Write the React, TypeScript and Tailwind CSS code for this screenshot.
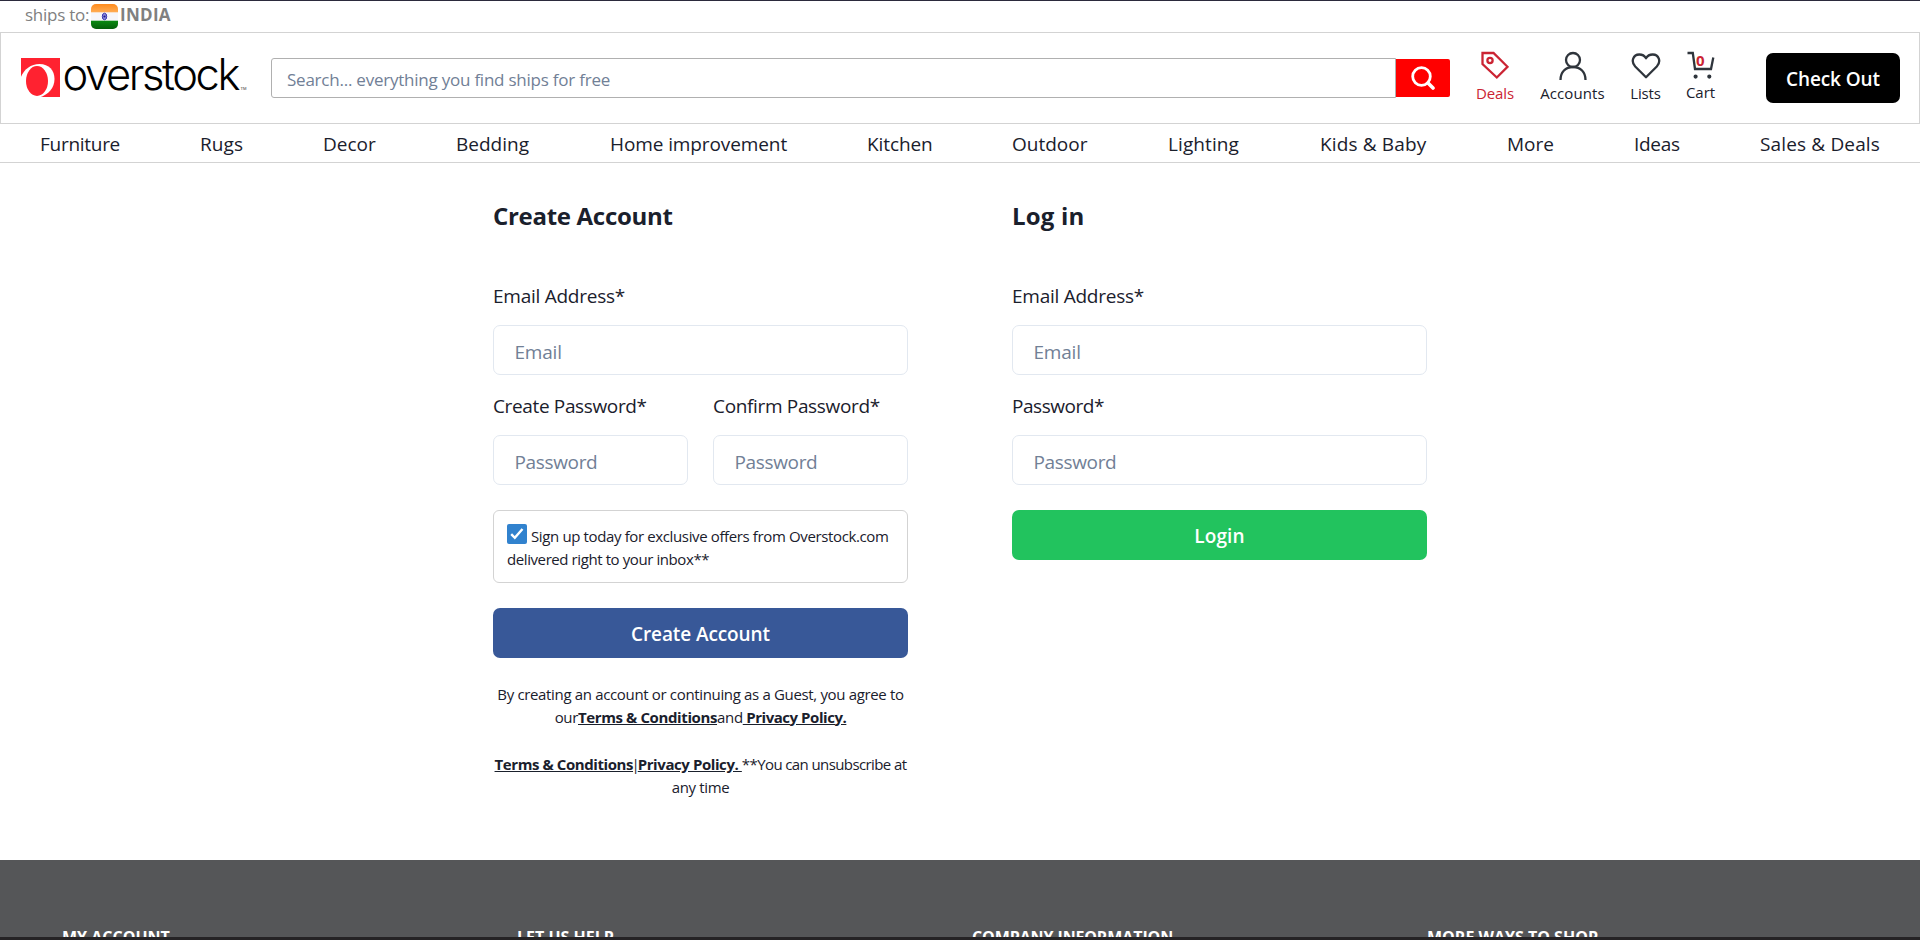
import type { ReactNode } from "react";

const navItems = [
  { label: "Furniture", cls: "w-[80px] tracking-[-0.28px]" },
  { label: "Rugs", cls: "w-[43px] tracking-[0.1px]" },
  { label: "Decor", cls: "w-[53px]" },
  { label: "Bedding", cls: "w-[74px]" },
  { label: "Home improvement", cls: "w-[177px] tracking-[-0.1px]" },
  { label: "Kitchen", cls: "w-[65px] tracking-[-0.1px]" },
  { label: "Outdoor", cls: "w-[76px]" },
  { label: "Lighting", cls: "w-[72px] tracking-[0.1px]" },
  { label: "Kids & Baby", cls: "w-[107px] tracking-[0.15px]" },
  { label: "More", cls: "w-[47px]" },
  { label: "Ideas", cls: "w-[46px] tracking-[-0.3px]" },
  { label: "Sales & Deals", cls: "w-[120px] tracking-[0.15px]" },
];

const footerItems = [
  { label: "MY ACCOUNT", cls: "" },
  { label: "LET US HELP", cls: "" },
  { label: "COMPANY INFORMATION", cls: "tracking-[-0.1px]" },
  { label: "MORE WAYS TO SHOP", cls: "" },
];

function Flag() {
  return (
    <svg width="27" height="25" viewBox="0 0 27 25">
      <defs>
        <clipPath id="flagClip"><rect width="27" height="25" rx="5" /></clipPath>
        <linearGradient id="saffron" x1="0" y1="0" x2="0" y2="1"><stop offset="0" stopColor="#ff8a1c" /><stop offset="1" stopColor="#ffad55" /></linearGradient>
        <linearGradient id="green" x1="0" y1="0" x2="0" y2="1"><stop offset="0" stopColor="#0a8a12" /><stop offset="1" stopColor="#045f0a" /></linearGradient>
      </defs>
      <g clipPath="url(#flagClip)">
        <rect width="27" height="25" fill="#f6f6fa" />
        <rect width="27" height="8.3" fill="url(#saffron)" />
        <rect y="16.7" width="27" height="8.3" fill="url(#green)" />
        <ellipse cx="13.5" cy="12.5" rx="2.2" ry="3.3" fill="#8f8fd6" stroke="#3a35b0" strokeWidth="1" />
        <circle cx="13.5" cy="12.5" r="1.1" fill="#1c1894" />
      </g>
    </svg>
  );
}

function Logo() {
  return (
    <svg width="226" height="50" viewBox="0 0 226 50" className="shrink-0 overflow-visible">
      <rect width="39" height="39" fill="#ff2230" />
      <path d="M-0.500 20C3 11 10 6 18.500 6C28 6 33.500 12.500 33.500 21C33.500 30 27.500 36.500 18.500 39.500H-0.500Z" fill="#fff" />
      <ellipse cx="16" cy="23" rx="11" ry="15" fill="#ff2230" />
      <text x="41.500" y="32" textLength="178" lengthAdjust="spacing" className="font-['Inter',sans-serif] text-[43.5px] font-light" fill="#000">overstock</text>
      <text x="219.500" y="32" textLength="6" lengthAdjust="spacingAndGlyphs" className="font-['Liberation_Sans',sans-serif] text-[4px]" fill="#333">TM</text>
    </svg>
  );
}

function HeaderAction({ label, cls, children }: { label: string; cls: string; children: ReactNode }) {
  return (
    <div className={`flex shrink-0 flex-col items-center ${cls}`}>
      {children}
      <span className="mt-px text-[15px] leading-[22px] whitespace-nowrap">{label}</span>
    </div>
  );
}

function Field({ label, labelCls, placeholder, type, inputCls }: { label: string; labelCls: string; placeholder: string; type: string; inputCls: string }) {
  return (
    <label className="flex min-w-0 flex-1 flex-col">
      <span className={`h-[30px] text-[19px] leading-[30px] whitespace-nowrap ${labelCls}`}>{label}</span>
      <input
        type={type}
        placeholder={placeholder}
        className={`mt-[14px] h-[50px] w-full rounded-[7px] border border-[#e2e8f0] px-[20.5px] pt-[3px] text-[19px] outline-none placeholder:text-[#718096] ${inputCls}`}
      />
    </label>
  );
}

export default function App() {
  return (
    <div className="flex h-[940px] w-[1920px] flex-col overflow-hidden bg-white font-['Open_Sans','Noto_Sans',sans-serif] text-[#1a202c]">
      <div className="h-px shrink-0 bg-[#2b2a3c]" />
      <div className="flex h-[31px] shrink-0 items-start pl-[25px] text-[17px] leading-[26px] text-[#808080]">
        <span className="w-[66px] pt-[1px] tracking-[-0.25px] whitespace-nowrap">ships to:</span>
        <span className="mt-[3px]"><Flag /></span>
        <b className="ml-[2px] pt-[1px] tracking-[0.3px]">INDIA</b>
      </div>

      <header className="flex h-[92px] shrink-0 items-start border border-[#d3d3d3] pl-5">
        <div className="mt-[25px] w-[250px] shrink-0"><Logo /></div>
        <div className="mt-[25px] flex h-10 w-[1179px] shrink-0">
          <input
            placeholder="Search... everything you find ships for free"
            className="h-10 w-[1125px] rounded-l-[3px] border border-[#b0b0b0] px-[15px] pt-[2px] text-[17px] tracking-[-0.23px] outline-none placeholder:text-[#718096]"
          />
          <button className="mt-px flex h-[38px] w-[54px] items-center justify-center rounded-r-[2px] bg-[#ff0000]">
            <svg width="24" height="24" viewBox="0 0 24 24" fill="none" stroke="#fff" strokeWidth="2.8" strokeLinecap="round">
              <circle cx="10.500" cy="10.500" r="8.800" />
              <path d="M17 17l5 5" strokeWidth="3.600" />
            </svg>
          </button>
        </div>
        <HeaderAction label="Deals" cls="mt-[18px] ml-[26px] w-[38px] text-[#cb2433] tracking-[-0.1px]">
          <svg width="28" height="30" viewBox="0 0 28 30" fill="none" stroke="currentColor" strokeWidth="2.3" className="-ml-px">
            <path d="M1.500 2H12.500L26.500 15.800L15.800 26.500L1.500 13Z" />
            <circle cx="9" cy="9.500" r="2.600" />
          </svg>
        </HeaderAction>
        <HeaderAction label="Accounts" cls="mt-[18px] ml-[26px] w-[65px] tracking-[0.1px]">
          <svg width="28" height="30" viewBox="0 0 28 30" fill="none" stroke="#2f353c" strokeWidth="2.3">
            <circle cx="14" cy="9" r="7" />
            <path d="M1.500 29C1.500 21 6.500 16 14 16S26.500 21 26.500 29" />
          </svg>
        </HeaderAction>
        <HeaderAction label="Lists" cls="mt-[18px] ml-[25px] w-[31px] tracking-[-0.2px]">
          <svg width="30" height="30" viewBox="0 0 30 30" fill="none" stroke="#2f353c" strokeWidth="2.3" strokeLinejoin="round">
            <path d="M15 26.300L4.200 15.500C-0.500 10.500 2.200 3.500 8.300 3.500C11.500 3.500 13.800 5.200 15 7.300C16.200 5.200 18.500 3.500 21.700 3.500C27.800 3.500 30.500 10.500 25.800 15.500Z" />
          </svg>
        </HeaderAction>
        <HeaderAction label="Cart" cls="relative mt-[17px] ml-[25px] w-[29px]">
          <svg width="28" height="30" viewBox="0 0 28 30" fill="none" stroke="#2f353c" strokeWidth="2.3">
            <path d="M0.500 3H5.800L8 19H24L26.300 7.500" />
            <circle cx="8.600" cy="26.600" r="1.300" fill="#2f353c" strokeWidth="1.600" />
            <circle cx="22.300" cy="26.600" r="1.300" fill="#2f353c" strokeWidth="1.600" />
          </svg>
          <span className="absolute top-[-1px] left-[10px] text-[15px] leading-[22px] font-bold text-[#cb2433]">0</span>
        </HeaderAction>
        <button className="mt-5 ml-[51px] h-[50px] w-[134px] shrink-0 rounded-[7px] bg-black pt-[3px] text-[19px] font-semibold tracking-[-0.1px] whitespace-nowrap text-white">
          Check Out
        </button>
      </header>

      <nav className="flex h-[39px] shrink-0 gap-20 border-b border-[#d3d3d3] pl-10 text-[19px] leading-[41px]">
        {navItems.map((n) => (
          <a key={n.label} className={`shrink-0 whitespace-nowrap ${n.cls}`}>{n.label}</a>
        ))}
      </nav>

      <main className="flex h-[697px] shrink-0 gap-[104px] pl-[493px]">
        <section className="w-[415px] pt-[35px]">
          <h1 className="h-9 text-[24px] leading-9 font-bold tracking-[-0.3px]">Create Account</h1>
          <div className="mt-[47px] flex"><Field label="Email Address*" labelCls="tracking-[-0.25px]" type="email" placeholder="Email" inputCls="tracking-[-0.2px]" /></div>
          <div className="mt-4 flex gap-[25px]">
            <Field label="Create Password*" labelCls="tracking-[-0.36px]" type="password" placeholder="Password" inputCls="tracking-[-0.35px]" />
            <Field label="Confirm Password*" labelCls="tracking-[-0.34px]" type="password" placeholder="Password" inputCls="tracking-[-0.35px]" />
          </div>
          <div className="mt-[25px] h-[73px] rounded-[6px] border border-[#d3d3d3] px-[13px] pt-[13px] text-[15px] leading-[23px] whitespace-nowrap">
            <div className="flex h-[23px]">
              <span className="flex size-5 items-center justify-center rounded-[2px] bg-[#3182ce]">
                <svg width="14" height="12" viewBox="0 0 14 12" fill="none" stroke="#fff" strokeWidth="2.400"><path d="M1.200 6.200L4.800 9.800L12.500 1" /></svg>
              </span>
              <span className="ml-[4px] pt-px tracking-[-0.37px]">Sign up today for exclusive offers from Overstock.com</span>
            </div>
            <div className="pt-px tracking-[-0.41px]">delivered right to your inbox**</div>
          </div>
          <button className="mt-[25px] h-[50px] w-full rounded-[7px] bg-[#385898] pt-[2px] text-[19px] font-semibold text-white tracking-[-0.1px]">Create Account</button>
          <p className="mt-[25px] text-center text-[15px] leading-[22.5px] tracking-[-0.34px] whitespace-nowrap">
            By creating an account or continuing as a Guest, you agree to<br />
            our<b className="tracking-[-0.39px] underline">Terms &amp; Conditions</b>and<b className="tracking-[-0.45px] underline">&nbsp;Privacy Policy.</b>
          </p>
          <p className="mt-[25px] text-center text-[15px] leading-[22.5px] tracking-[-0.55px] whitespace-nowrap">
            <b className="tracking-[-0.42px] underline">Terms &amp; Conditions</b><span className="-mx-[1.500px]">|</span><b className="tracking-[-0.42px] underline">Privacy Policy.&nbsp;</b><span className="tracking-[-0.6px]">**You can unsubscribe at</span><br />
            <span className="tracking-[-0.35px]">any time</span>
          </p>
        </section>
        <section className="w-[415px] pt-[35px]">
          <h1 className="h-9 text-[24px] leading-9 font-bold tracking-[0.2px]">Log in</h1>
          <div className="mt-[47px] flex"><Field label="Email Address*" labelCls="tracking-[-0.25px]" type="email" placeholder="Email" inputCls="tracking-[-0.2px]" /></div>
          <div className="mt-4 flex"><Field label="Password*" labelCls="tracking-[-0.45px]" type="password" placeholder="Password" inputCls="tracking-[-0.35px]" /></div>
          <button className="mt-[25px] h-[50px] w-full rounded-[7px] bg-[#22c35e] pt-[2px] text-[19px] font-semibold text-white tracking-[0.1px]">Login</button>
        </section>
      </main>

      <footer className="flex h-[77px] shrink-0 overflow-hidden bg-[#555658] pt-[66px] pl-[62px] text-[16px] leading-[22px] font-bold text-white">
        {footerItems.map((f) => (
          <div key={f.label} className={`w-[455px] shrink-0 whitespace-nowrap ${f.cls}`}>{f.label}</div>
        ))}
      </footer>
      <div className="h-[3px] shrink-0 bg-[#252325]" />
    </div>
  );
}
